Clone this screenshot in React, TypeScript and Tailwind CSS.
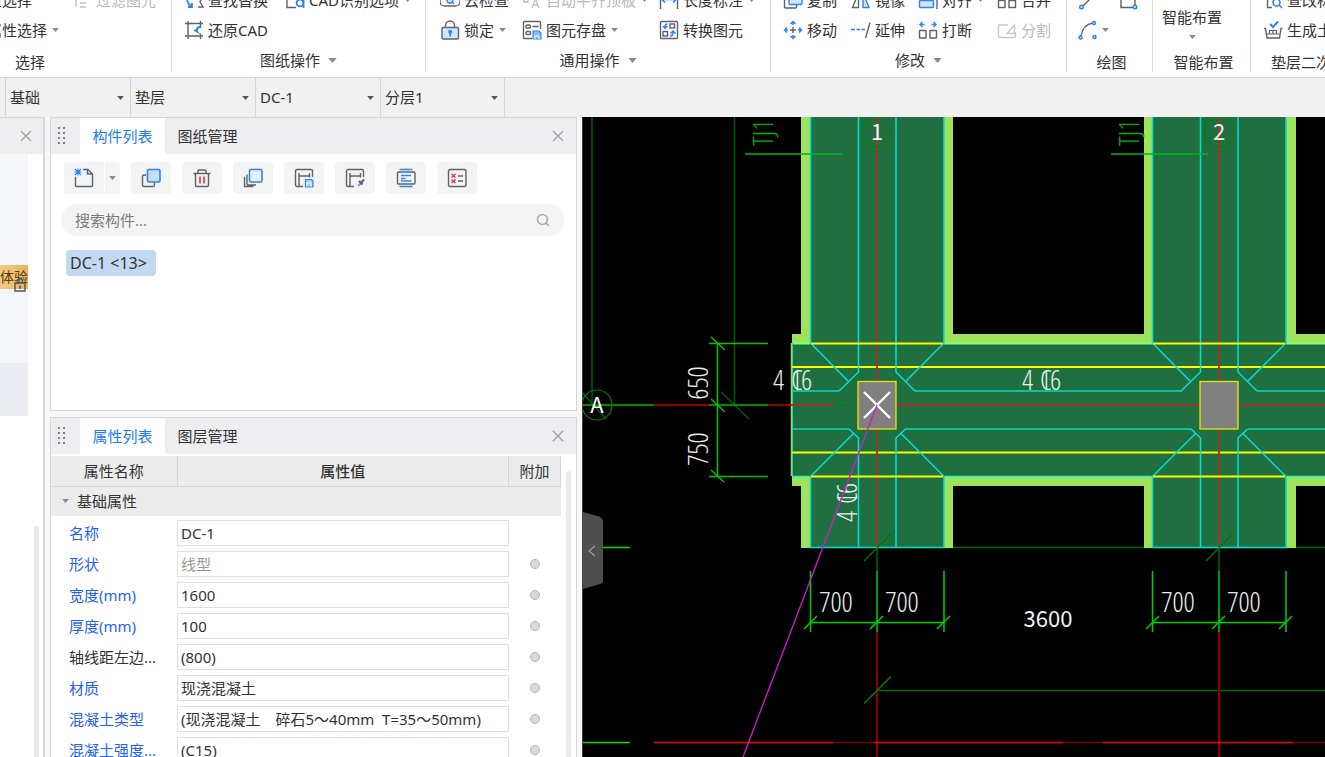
import React, { useState } from "react";

type Children = { children: React.ReactNode };

const FONT = "font-['Noto_Sans','Noto_Sans_CJK_SC',sans-serif]";

/* ---------- icons ---------- */

function Icon({ children }: Children) {
  return (
    <svg
      viewBox="0 0 20 20"
      className="h-5 w-5 shrink-0"
      fill="none"
      stroke="#5c6270"
      strokeWidth="1.4"
      aria-hidden="true"
    >
      {children}
    </svg>
  );
}

const BLUE = "#2b85f0";

const icons = {
  filter: (
    <Icon>
      <g stroke="#c4c4c4">
        <path d="M4 2v15M8 5h6M8 9h6M8 13h6M8 17h6M1 4h3" />
      </g>
    </Icon>
  ),
  find: (
    <Icon>
      <path d="M12 3a6 6 0 0 1 4 9l3 5h-5" />
      <path d="M3 7q0 8 5 9M8 13v4H4" stroke={BLUE} strokeWidth="1.8" />
    </Icon>
  ),
  cadIdentify: (
    <Icon>
      <path d="M2 1v16.5h9" />
      <circle cx="15" cy="13" r="3.4" stroke={BLUE} strokeWidth="1.8" />
      <path d="M18.5 10v8" stroke={BLUE} strokeWidth="1.8" />
    </Icon>
  ),
  restoreCad: (
    <Icon>
      <path d="M1 3.500h18M1 16h18M4 1v18M16.500 1v7M16.500 13.500V19" />
      <path d="M17 6.500q-4 .5-4.500 4" stroke={BLUE} strokeWidth="2.2" />
      <path d="M9.500 10.500 14 8v3.500l3 3.500z" fill={BLUE} stroke="none" />
    </Icon>
  ),
  cloudCheck: (
    <Icon>
      <path d="M4 7a4.500 4.500 0 0 0 1 9h10a4.500 4.500 0 0 0 1-9" />
      <circle cx="10" cy="10" r="3" stroke={BLUE} fill="#d5e7fc" />
      <path d="m12 12 2 2" stroke={BLUE} />
    </Icon>
  ),
  alignSlab: (
    <Icon>
      <g stroke="#c0c0c0">
        <path d="M2 2v10h4V2M10 2v7M10 18l3.500-9 3.500 9M11.500 15h4" />
      </g>
    </Icon>
  ),
  lengthDim: (
    <Icon>
      <path d="M1.500 2v17M18.500 2v17" />
      <path d="M3 9.500h14M6 6.500 3 9.500l3 3M14 6.500l3 3-3 3" stroke={BLUE} strokeWidth="1.6" />
    </Icon>
  ),
  lock: (
    <Icon>
      <path d="M5.500 7.500V5.500a4.500 4.500 0 0 1 9 0v2" />
      <rect x="2" y="7.500" width="16.500" height="11.500" rx="1.200" fill="#d3e6fc" />
      <circle cx="10.200" cy="11.800" r="2" fill={BLUE} stroke="none" />
      <path d="M10.200 12v4.500" stroke={BLUE} strokeWidth="1.800" />
    </Icon>
  ),
  saveElement: (
    <Icon>
      <path d="M10 18.500H2.500A1 1 0 0 1 1.500 17.500v-15a1 1 0 0 1 1-1h15a1 1 0 0 1 1 1V9M10.500 6.500h6" />
      <rect x="4" y="5" width="4.500" height="3" rx="1" />
      <rect x="4" y="11.500" width="4.500" height="3" rx="1" />
      <path d="M11 11h6l2 2v6h-8z" fill="#8abcf7" stroke={BLUE} strokeWidth="1.100" />
      <path d="M13 19v-3h4v3" stroke="#fff" strokeWidth="1" />
    </Icon>
  ),
  convert: (
    <Icon>
      <rect x="1.500" y="1.500" width="17" height="17" rx="1" />
      <rect x="11" y="4" width="4.500" height="4" />
      <rect x="4" y="11.500" width="4.500" height="4.500" />
      <path d="M8.500 4Q6 4 6 7M4 6l2 2.500L8.500 6M11 16q3 0 3-3.500M11.500 13.500 14 11l2.500 2.500" stroke={BLUE} strokeWidth="1.500" />
    </Icon>
  ),
  copy: (
    <Icon>
      <path d="M4 7H2.500a1 1 0 0 0-1 1v9a1 1 0 0 0 1 1h10a1 1 0 0 0 1-1v-2" />
      <rect x="6" y="3" width="13" height="11.500" rx="1.500" fill="#d3e6fc" stroke={BLUE} />
    </Icon>
  ),
  mirror: (
    <Icon>
      <path d="M7.500 3v14.500H1.500z" />
      <path d="M12 3v14.500h6z" fill="#d3e6fc" stroke={BLUE} />
    </Icon>
  ),
  alignTo: (
    <Icon>
      <rect x="1.500" y="10.500" width="14" height="7" rx="1" fill="#d3e6fc" stroke={BLUE} />
      <path d="M19 1v18" />
    </Icon>
  ),
  merge: (
    <Icon>
      <rect x="1.500" y="10.500" width="6.500" height="7" />
      <rect x="12" y="10.500" width="6.500" height="7" />
      <path d="M5 6h10" stroke={BLUE} />
    </Icon>
  ),
  move: (
    <Icon>
      <path d="M7 10h6M10 7v6" />
      <path
        d="M7.500 4 10 1.500 12.500 4M7.500 16l2.500 2.500 2.500-2.500M4 7.500 1.500 10 4 12.500M16 7.500l2.500 2.500-2.500 2.500M10 1.500v3.500M10 15v3.500M1.500 10H5M15 10h3.500"
        stroke={BLUE}
        strokeWidth="1.500"
      />
    </Icon>
  ),
  extend: (
    <Icon>
      <path d="M0 9.500h4M5.500 9.500h3.500M10.500 9.500H14" stroke={BLUE} strokeWidth="1.600" />
      <path d="M19 2.500 14.500 18" />
    </Icon>
  ),
  breakApart: (
    <Icon>
      <rect x="1.500" y="10.500" width="6.500" height="7.500" rx=".5" />
      <rect x="12" y="10.500" width="6.500" height="7.500" rx=".5" />
      <path d="M4.500 2 2 4.500 4.500 7M2 4.500h4.500M15.500 2 18 4.500 15.500 7M18 4.500h-4.500" stroke={BLUE} strokeWidth="1.500" />
    </Icon>
  ),
  split: (
    <Icon>
      <g stroke="#c8c8c8">
        <path d="M11 5H2.500a1 1 0 0 0-1 1v10.500a1 1 0 0 0 1 1h15a1 1 0 0 0 1-1V12M10 13.500l7.500-8.500v8.500z" />
      </g>
    </Icon>
  ),
  line: (
    <Icon>
      <path d="M5 16 16 5" />
      <circle cx="3.500" cy="17" r="1.800" stroke={BLUE} fill="#d3e6fc" />
    </Icon>
  ),
  rect: (
    <Icon>
      <path d="M2 2v15.500h14V2" />
      <circle cx="16" cy="17" r="1.800" stroke={BLUE} fill="#d3e6fc" />
    </Icon>
  ),
  arc: (
    <Icon>
      <path d="M3 16C4 8 8 4 15 3" />
      <g stroke={BLUE} fill="#d3e6fc">
        <circle cx="2.500" cy="17.500" r="1.500" />
        <circle cx="16" cy="3" r="1.500" />
        <circle cx="16.500" cy="17" r="1.500" />
      </g>
    </Icon>
  ),
  editLabel: (
    <Icon>
      <path d="M3 8q2 1 1.500 4v5.500H9" />
      <circle cx="13.500" cy="12.500" r="3.500" stroke={BLUE} strokeWidth="1.600" />
      <path d="m16 15 3 3" stroke={BLUE} strokeWidth="1.600" />
    </Icon>
  ),
  earthwork: (
    <Icon>
      <path d="M1 8.500h1.500L4 18h12.500L18 8.500h1.500" />
      <path d="M6.500 14v-3.500h7V14M10 10.500V14M4 14h12.500" strokeWidth="1.200" />
      <path d="m7 4 3 3 5-5.500" stroke={BLUE} strokeWidth="2" />
    </Icon>
  ),
  create: (
    <Icon>
      <path d="M9 1.500h5l4.500 4.500v11.500a1 1 0 0 1-1 1h-15a1 1 0 0 1-1-1V9M13.500 1.500V6h5" />
      <path d="M1 1l6 6M7 1 1 7M4 .5v7M.5 4h7" stroke={BLUE} strokeWidth="1.100" />
    </Icon>
  ),
  duplicate: (
    <Icon>
      <path d="M5 7H3a1.500 1.500 0 0 0-1.500 1.500v8.500A1.500 1.500 0 0 0 3 18.500h9a1.500 1.500 0 0 0 1.500-1.500v-3" />
      <rect x="6.500" y="1.500" width="12.500" height="12.500" rx="1.500" fill="#c6dcf7" stroke={BLUE} strokeWidth="1.600" />
    </Icon>
  ),
  remove: (
    <Icon>
      <path d="M1.500 5.500h17M6 5V3a1 1 0 0 1 1-1h6a1 1 0 0 1 1 1v2M3.500 5.500v11.500a1.500 1.500 0 0 0 1.500 1.500h10a1.500 1.500 0 0 0 1.500-1.500V5.500" />
      <path d="M8 8.500v7M12 8.500v7" stroke="#e8343a" strokeWidth="1.600" />
    </Icon>
  ),
  layerCopy: (
    <Icon>
      <path d="M4 6.500v9.500a1 1 0 0 0 1 1h8M1.500 9v9.500h9" />
      <rect x="6.500" y="1.500" width="12.500" height="12.500" rx="1.500" fill="#e6f0fd" stroke={BLUE} strokeWidth="1.600" />
    </Icon>
  ),
  saveMember: (
    <Icon>
      <path d="M9 18.500H3A1.500 1.500 0 0 1 1.500 17V3A1.500 1.500 0 0 1 3 1.500h14A1.500 1.500 0 0 1 18.500 3v6M5 18V5M5 8h10.500M15.500 5v4.500" />
      <path d="M11.500 11.500h6l1.500 1.500v6h-7.500z" fill="#a9cdf8" stroke={BLUE} strokeWidth="1.200" />
      <path d="M13 18.500V15h4v3.500" stroke="#fff" strokeWidth="1.100" />
    </Icon>
  ),
  pickMember: (
    <Icon>
      <path d="M9 18.500H3A1.500 1.500 0 0 1 1.500 17V3A1.500 1.500 0 0 1 3 1.500h14A1.500 1.500 0 0 1 18.500 3v6M5 18V5M5 8h10.500M15.500 5v4.500" />
      <path d="m13 18 4-4" stroke="#6f9fe0" strokeWidth="2" />
      <path d="m14 13 3.500 3.500M16 15l3-3.500" strokeWidth="2.200" />
    </Icon>
  ),
  textPanel: (
    <Icon>
      <rect x="1.500" y="4" width="17.500" height="12" rx="1" />
      <path d="M3.500 1.500h13M3.500 18.500h13" stroke={BLUE} strokeWidth="1.600" />
      <path d="M5 7.500h10M5 10.500h4.500M5 13h10.500" stroke={BLUE} strokeWidth="1.400" />
    </Icon>
  ),
  checkList: (
    <Icon>
      <rect x="1.500" y="1.500" width="17.500" height="17" rx="1.500" />
      <path d="M11 8h5M11 13h5" />
      <path d="m4.500 6 4 3.500M8.500 6l-4 3.500M4.500 11.500l4 3.500M8.500 11.500l-4 3.500" stroke="#e8343a" strokeWidth="1.500" />
    </Icon>
  ),
};

function Caret({ tone = "#8a8a8a", large = false }: { tone?: string; large?: boolean }) {
  return (
    <svg viewBox="0 0 10 6" className={large ? "h-[5px] w-[9px] shrink-0" : "h-[4px] w-[7px] shrink-0"} aria-hidden="true">
      <polygon points="0,0 10,0 5,6" fill={tone} />
    </svg>
  );
}

function Close({ label }: { label: string }) {
  return (
    <button type="button" aria-label={label} className="flex h-5 w-5 items-center justify-center">
      <svg viewBox="0 0 12 12" className="h-3 w-3" stroke="#a0a0a0" strokeWidth="1.400" aria-hidden="true">
        <path d="m1 1 10 10M11 1 1 11" />
      </svg>
    </button>
  );
}

/* ---------- ribbon ---------- */

type ToolProps = { icon?: React.ReactNode; label: string; menu?: boolean; off?: boolean };

function Tool({ icon, label, menu, off }: ToolProps) {
  return (
    <button
      type="button"
      disabled={off}
      className={`flex h-[30px] items-center gap-1 whitespace-nowrap ${off ? "text-[#b9b9b9]" : "text-[#333]"}`}
    >
      {icon}
      <span>{label}</span>
      {menu && (
        <span className="pl-[1px]">
          <Caret />
        </span>
      )}
    </button>
  );
}

function GroupLabel({ children, menu }: Children & { menu?: boolean }) {
  if (menu) {
    return (
      <button type="button" className="flex h-[30px] w-full items-center justify-center gap-2 whitespace-nowrap">
        {children}
        <Caret large />
      </button>
    );
  }
  return <div className="flex h-[34px] items-center justify-center pl-1 whitespace-nowrap">{children}</div>;
}

function Ribbon() {
  return (
    <header className="h-[78px] shrink-0 overflow-hidden border-b border-[#d6d6d6] bg-white text-[15px]/[22px] text-[#333]">
      <div className="-mt-[15px] flex h-[87px] divide-x divide-[#d9d9d9]">
        <section className="w-[172px] shrink-0">
          <div className="grid grid-cols-[104px_1fr]">
            <div className="-ml-[28px]">
              <Tool label="批量选择" />
              <Tool label="按属性选择" menu />
            </div>
            <div className="-ml-8">
              <Tool icon={icons.filter} label="过滤图元" off />
            </div>
          </div>
          <div className="w-14">
            <GroupLabel>选择</GroupLabel>
          </div>
        </section>
        <section className="w-[254px] shrink-0">
          <div className="grid grid-cols-[101px_1fr] pl-3">
            <Tool icon={icons.find} label="查找替换" />
            <Tool icon={icons.cadIdentify} label="CAD识别选项" menu />
            <Tool icon={icons.restoreCad} label="还原CAD" />
          </div>
          <GroupLabel menu>图纸操作</GroupLabel>
        </section>
        <section className="w-[345px] shrink-0">
          <div className="grid grid-cols-[82px_137px_1fr] pl-[14px]">
            <Tool icon={icons.cloudCheck} label="云检查" />
            <Tool icon={icons.alignSlab} label="自动平齐顶板" menu off />
            <Tool icon={icons.lengthDim} label="长度标注" menu />
            <Tool icon={icons.lock} label="锁定" menu />
            <Tool icon={icons.saveElement} label="图元存盘" menu />
            <Tool icon={icons.convert} label="转换图元" />
          </div>
          <GroupLabel menu>通用操作</GroupLabel>
        </section>
        <section className="w-[296px] shrink-0">
          <div className="grid grid-cols-[68px_67px_79px_1fr] pl-3">
            <Tool icon={icons.copy} label="复制" />
            <Tool icon={icons.mirror} label="镜像" />
            <Tool icon={icons.alignTo} label="对齐" menu />
            <Tool icon={icons.merge} label="合并" />
            <Tool icon={icons.move} label="移动" />
            <Tool icon={icons.extend} label="延伸" />
            <Tool icon={icons.breakApart} label="打断" />
            <Tool icon={icons.split} label="分割" off />
          </div>
          <GroupLabel menu>修改</GroupLabel>
        </section>
        <section className="w-[86px] shrink-0">
          <div className="grid grid-cols-[41px_1fr] pl-[11px]">
            <button type="button" aria-label="直线" className="flex h-[30px] items-center">
              {icons.line}
            </button>
            <button type="button" aria-label="矩形" className="flex h-[30px] items-center">
              {icons.rect}
            </button>
            <button type="button" aria-label="圆弧" className="flex h-[30px] items-center gap-1">
              {icons.arc}
              <Caret />
            </button>
          </div>
          <GroupLabel>绘图</GroupLabel>
        </section>
        <section className="w-[98px] shrink-0">
          <button type="button" className="flex h-[60px] w-[78px] flex-col items-center justify-end gap-[7px] pb-[6px]">
            <span>智能布置</span>
            <Caret />
          </button>
          <GroupLabel>智能布置</GroupLabel>
        </section>
        <section className="min-w-0 flex-1 overflow-hidden pl-3">
          <Tool icon={icons.editLabel} label="查改标高" />
          <Tool icon={icons.earthwork} label="生成土方" />
          <div className="flex h-[34px] items-center pl-2 whitespace-nowrap">垫层二次编辑</div>
        </section>
      </div>
    </header>
  );
}

/* ---------- context bar ---------- */

const contexts = [
  { label: "构件类别", value: "基础" },
  { label: "构件类型", value: "垫层" },
  { label: "构件", value: "DC-1" },
  { label: "分层", value: "分层1" },
];

function ContextBar() {
  return (
    <nav className="flex h-[39px] shrink-0 bg-[#f1f1f1] pl-[5px]">
      {contexts.map((c) => (
        <div key={c.label} className="relative w-[125px] border-l border-[#d6d6d6] last:border-r">
          <select
            aria-label={c.label}
            defaultValue={c.value}
            className="h-full w-full appearance-none bg-transparent pl-1 text-[15px] text-[#333] outline-none"
          >
            <option>{c.value}</option>
          </select>
          <span className="pointer-events-none absolute inset-y-0 right-[6px] flex items-center">
            <Caret tone="#555" />
          </span>
        </div>
      ))}
    </nav>
  );
}

/* ---------- dock panels ---------- */

function PanelTabs({ tabs }: { tabs: string[] }) {
  const [active, setActive] = useState(0);
  return (
    <div className="flex h-9 shrink-0 items-center bg-[#eeeef0]">
      <svg viewBox="0 0 8 18" className="mx-[7px] h-[18px] w-2" fill="#808080" aria-hidden="true">
        <path d="M0 0h2v2H0zM5 0h2v2H5zM0 5h2v2H0zM5 5h2v2H5zM0 10h2v2H0zM5 10h2v2H5zM0 15h2v2H0zM5 15h2v2H5z" />
      </svg>
      <div role="tablist" className="ml-[7px] flex h-full">
        {tabs.map((t, i) => (
          <button
            key={t}
            type="button"
            role="tab"
            aria-selected={i === active}
            onClick={() => setActive(i)}
            className={`w-[85px] text-[15px] ${i === active ? "bg-white text-[#1c7df2]" : "text-[#333]"}`}
          >
            {t}
          </button>
        ))}
      </div>
      <div className="ml-auto pr-2">
        <Close label="关闭" />
      </div>
    </div>
  );
}

const memberTools = [
  { label: "复制", icon: icons.duplicate },
  { label: "删除", icon: icons.remove },
  { label: "层间复制", icon: icons.layerCopy },
  { label: "构件存盘", icon: icons.saveMember },
  { label: "提取构件", icon: icons.pickMember },
  { label: "构件排序", icon: icons.textPanel },
  { label: "批量删除", icon: icons.checkList },
];

function MemberPanel() {
  return (
    <section className="flex h-[294px] shrink-0 flex-col border border-[#d6d6da] bg-white">
      <PanelTabs tabs={["构件列表", "图纸管理"]} />
      <div className="flex gap-[11px] px-[13px] pt-2">
        <div className="flex h-8 gap-px">
          <button type="button" aria-label="新建" className="flex w-10 items-center justify-center rounded-l bg-[#f4f4f4]">
            {icons.create}
          </button>
          <button type="button" aria-label="新建选项" className="flex w-[15px] items-center justify-center rounded-r bg-[#f4f4f4]">
            <Caret />
          </button>
        </div>
        {memberTools.map((t) => (
          <button
            key={t.label}
            type="button"
            aria-label={t.label}
            className="flex h-8 w-10 items-center justify-center rounded bg-[#f4f4f4]"
          >
            {t.icon}
          </button>
        ))}
      </div>
      <label className="mr-3 ml-[10px] mt-[10px] flex h-8 items-center rounded-full bg-[#f4f4f4] pr-[14px] pl-[14px]">
        <input
          type="search"
          aria-label="搜索构件"
          placeholder="搜索构件..."
          className="min-w-0 flex-1 bg-transparent text-[15px] outline-none placeholder:text-[#7a7a7a]"
        />
        <svg viewBox="0 0 14 14" className="h-[14px] w-[14px]" fill="none" stroke="#aaa" strokeWidth="1.600" aria-hidden="true">
          <circle cx="6.500" cy="6.500" r="5" />
          <path d="m9.500 9.500 3.500 3.500" />
        </svg>
      </label>
      <button
        type="button"
        className="mt-[14px] ml-[15px] h-[26px] w-[90px] rounded bg-[#c2d9f2] pl-1 text-left text-[16px] whitespace-nowrap text-[#333]"
      >
        DC-1 &lt;13&gt;
      </button>
    </section>
  );
}

type Property = { name: string; value: string; derived?: boolean; locked?: boolean; noExtra?: boolean };

const properties: Property[] = [
  { name: "名称", value: "DC-1", noExtra: true },
  { name: "形状", value: "线型", locked: true },
  { name: "宽度(mm)", value: "1600" },
  { name: "厚度(mm)", value: "100" },
  { name: "轴线距左边...", value: "(800)", derived: true },
  { name: "材质", value: "现浇混凝土" },
  { name: "混凝土类型", value: "(现浇混凝土　碎石5～40mm\u00a0\u00a0T=35～50mm)" },
  { name: "混凝土强度...", value: "(C15)" },
];

function PropertyPanel() {
  return (
    <section className="flex min-h-0 flex-1 flex-col overflow-hidden border border-b-0 border-[#d6d6da] bg-white">
      <PanelTabs tabs={["属性列表", "图层管理"]} />
      <div className="flex min-h-0 flex-1 pt-[2px]">
        <div className="min-h-0 flex-1 overflow-hidden">
          <table className="w-full table-fixed border-collapse text-[15px]/[22px] text-[#333]">
            <colgroup>
              <col className="w-[126px]" />
              <col />
              <col className="w-[52px]" />
            </colgroup>
            <thead>
              <tr className="h-[30px] border-b border-[#d6d6d6] bg-[#ececec]">
                <th className="border-r border-[#d6d6d6] p-0 font-normal">属性名称</th>
                <th className="border-r border-[#d6d6d6] p-0 font-medium">属性值</th>
                <th className="border-r border-[#d6d6d6] p-0 font-normal">附加</th>
              </tr>
            </thead>
            <tbody>
              <tr className="h-[30px] bg-[#ececec]">
                <td colSpan={3} className="p-0">
                  <button type="button" className="flex items-center gap-2 pl-[11px]">
                    <Caret />
                    基础属性
                  </button>
                </td>
              </tr>
              <tr className="h-px">
                <td colSpan={3} className="p-0" />
              </tr>
              {properties.map((p, i) => (
                <tr key={p.name} className="h-[31px]">
                  <td className={`p-0 pl-[18px] whitespace-nowrap ${p.derived ? "text-[#333]" : "text-[#1f62f5]"}`}>
                    <label htmlFor={`prop-${i}`}>{p.name}</label>
                  </td>
                  <td className="p-0">
                    <input
                      id={`prop-${i}`}
                      defaultValue={p.value}
                      readOnly={p.locked}
                      className={`block h-[26px] w-full border border-[#e0e0e0] bg-white pl-[3px] text-[15px] outline-none ${
                        p.locked ? "text-[#999]" : "text-[#333]"
                      }`}
                    />
                  </td>
                  <td className="p-0">
                    {!p.noExtra && (
                      <input
                        type="checkbox"
                        aria-label={`附加 ${p.name}`}
                        className="mx-auto block h-[10px] w-[10px] appearance-none rounded-full border border-[#b4b5ba] bg-[#d9dade]"
                      />
                    )}
                  </td>
                </tr>
              ))}
            </tbody>
          </table>
        </div>
        <div className="w-[15px] shrink-0 pt-[15px] pl-[5px]">
          <div className="h-full w-[5px] rounded-t-full bg-[#ebebeb]" />
        </div>
      </div>
    </section>
  );
}

function NavigatorStrip() {
  return (
    <aside className="flex w-[45px] shrink-0 flex-col border-t border-r-2 border-[#d6d6da] bg-white">
      <div className="flex h-9 shrink-0 items-center justify-end bg-[#eeeef0] pr-[7px]">
        <Close label="关闭导航栏" />
      </div>
      <div className="flex min-h-0 flex-1">
        <div className="w-[28px]">
          <div className="h-[209px] bg-[#f5f6f9] pt-[111px]">
            <div className="relative h-6 overflow-visible bg-linear-to-r from-[#f0cc84] to-[#e6b45a] text-[14px]/[24px] whitespace-nowrap text-[#5c3a10]">
              体验
              <svg viewBox="0 0 12 14" className="absolute top-[13px] left-[14px] h-[14px] w-3" fill="none" stroke="#4c5566" strokeWidth="1.400" aria-hidden="true">
                <path d="M3.500 5V3a2.500 2.500 0 0 1 5 0v2M1 5h10v8H1zM6 8v3M5 8.500h2" />
              </svg>
            </div>
          </div>
          <div className="h-[53px] bg-[#ebecf1]" />
        </div>
        <div className="ml-[6px] w-[5px] pt-[372px]">
          <div className="h-full rounded-t-full bg-[#e9e9e9]" />
        </div>
      </div>
    </aside>
  );
}

/* ---------- drawing ---------- */

const NARROW = "'Open Sans Condensed Light','Roboto Condensed Light','Roboto Condensed','Liberation Sans Narrow','Noto Sans',sans-serif";

function Rebar({ x, y }: { x: number; y: number }) {
  return (
    <g fill="#e6efe9" fontFamily={NARROW} fontSize="28" fontWeight="300">
      <text x={x} y={y}>4</text>
      <text x={x + 18} y={y}>C</text>
      <text x={x + 18} y={y}>1</text>
      <text x={x + 28} y={y}>6</text>
    </g>
  );
}

function Joint({ x, tagX, name }: { x: number; tagX: number; name: string }) {
  return (
    <g>
      <path d={`M${x} 117V548`} stroke="#9b3826" strokeWidth="2" />
      <path d={`M${x} 632V757`} stroke="#8c0000" strokeWidth="2" />
      <path d={`M${x} 548V571`} stroke="#004d00" strokeWidth="2" />
      <g stroke="#06dfd6" strokeWidth="1.500" fill="none">
        <path d={`M${x - 66.500} 117V343L${x - 29} 381M${x + 67} 117V343L${x + 29} 381`} />
        <path d={`M${x - 18.500} 117V372L${x - 38} 391M${x + 19} 117V372L${x + 38} 391`} />
        <path d={`M${x - 28} 429L${x - 18.500} 438V548M${x + 28.500} 429L${x + 19} 438V548`} />
        <path d={`M${x - 23.500} 433.500L${x - 66.500} 476.500V547.500H${x + 67}V476.500L${x + 24} 433.500`} />
      </g>
      <path d={`M${x - 66} 343.500H${x + 66}M${x - 66} 476.500H${x + 66}`} stroke="#fdfd00" strokeWidth="2" />
      <circle cx={x} cy="132" r="15" fill="none" stroke="#0c7a1c" strokeWidth="1.200" />
      <text x={x} y="140" textAnchor="middle" fill="#eef4ee" fontSize="22" fontFamily="'Noto Sans CJK SC',sans-serif">
        {name}
      </text>
      <path d={`M${x - 13} 561L${x + 14} 534M877 690.500l-13 13M877 690.500l14-14`} stroke="#007400" strokeWidth="1.300" />
      <rect x={x - 19} y="381.500" width="38" height="47.500" fill="#808080" stroke="#e6e600" strokeWidth="1.300" />
      <g stroke="#00d000" strokeWidth="1.500">
        <path d={`M${x - 66.500} 571V632M${x} 571V632M${x + 67} 571V632M${x - 66.500} 622.500H${x + 67}`} />
        <path d={`M${x - 73} 629l13-13M${x - 7} 629l13-13M${x + 60} 629l13-13`} />
      </g>
      <g fill="#e8e8e8" fontFamily={NARROW} fontSize="28" fontWeight="300" textAnchor="middle">
        <text x={x - 41} y="612">700</text>
        <text x={x + 25} y="612">700</text>
      </g>
      <path d={`M${tagX} 154h97`} stroke="#00b818" strokeWidth="1.500" />
      <text
        transform={`translate(${tagX + 28} 146) rotate(-90)`}
        fill="#00b000"
        fontSize="28"
        fontWeight="300"
        fontFamily={NARROW}
      >
        TJ1
      </text>
    </g>
  );
}

function Drawing() {
  return (
    <svg className="block h-full w-full" role="img" aria-label="垫层平面图">
      <g transform="translate(-583 -117)">
        <g stroke="#005a00" strokeWidth="1.500">
          <path d="M592 117V405M734.500 117V405M721 392l28 27M582 392l24 27" />
          <path d="M944 547.500H3000M877 690.500H3000" stroke="#006a00" />
        </g>
        <g fill="#9fe35a">
          <path d="M792 334H3000V486H792zM801 117H953V548H801zM1144 117H1296V548H1144z" />
        </g>
        <g fill="#206f40">
          <path d="M792 343H3000V476H792zM810 117H944V548H810zM1153 117H1286V548H1153z" />
        </g>
        <path d="M944 343.500H1153M1286 343.500H3000M792 343.500H810" stroke="#7dff80" strokeWidth="2" />
        <path d="M944 476.500H1153M1286 476.500H3000M792 476.500H810" stroke="#2af0c8" strokeWidth="1.500" />
        <path d="M792 391H839M915 391H1182M1257 391H3000M792 429H849M905 429H1191M1248 429H3000" stroke="#0fd3c5" strokeWidth="1.500" />
        <path d="M791.500 343V476" stroke="#b8d800" strokeWidth="1.500" />
        <path d="M792.500 343V476" stroke="#00e0d0" />

        <path d="M582 405H654M709 405H768" stroke="#00b400" strokeWidth="1.500" />
        <path d="M654 405H709M768 405H792" stroke="#c00000" strokeWidth="1.500" />
        <path d="M792 405H834M896 405H3000" stroke="#a53224" strokeWidth="2" />
        <path d="M834 405H852" stroke="#0a7a1c" strokeWidth="1.500" />
        <path d="M792 367H3000M792 452.500H3000" stroke="#fdfd00" strokeWidth="2" />

        <path d="M602 547.500H630M582 742.500H630" stroke="#00e000" strokeWidth="1.500" />

        <Joint x={877} tagX={745} name="1" />
        <Joint x={1219} tagX={1111} name="2" />

        <path d="M654 742.500H833M874 742.500H1063M1103 742.500H1293M1333 742.500H3000" stroke="#f50000" strokeWidth="1.500" />
        <path d="M833 742.500H874M1063 742.500H1103M1293 742.500H1333" stroke="#700000" strokeWidth="1.500" />

        <g stroke="#00c400" strokeWidth="1.500">
          <path d="M717.500 343V476M709 343.500H768M709 476.500H768" />
          <path d="M711 337l14 13M711 399l14 13M711 470l13 12" />
        </g>
        <g fill="#e8e8e8" fontFamily={NARROW} fontSize="28" fontWeight="300" textAnchor="middle">
          <text transform="translate(708 383) rotate(-90)">650</text>
          <text transform="translate(708 449) rotate(-90)">750</text>
        </g>

        <circle cx="597" cy="405" r="15" fill="none" stroke="#008000" strokeWidth="1.200" />
        <text x="597" y="413" textAnchor="middle" fill="#fff" fontSize="22" fontFamily="'Noto Sans CJK SC',sans-serif">
          A
        </text>
        <text x="1048" y="627" textAnchor="middle" fill="#f2f2f2" fontSize="22" fontFamily="'Noto Sans CJK SC',sans-serif">
          3600
        </text>

        <Rebar x={773} y={390} />
        <Rebar x={1022} y={390} />
        <g transform="translate(857 522) rotate(-90)">
          <Rebar x={0} y={0} />
        </g>

        <path d="M864 392l26 26M890 392l-26 26" stroke="#fff" strokeWidth="2.400" />
        <path d="M877 405 743 757" stroke="#d418d4" strokeWidth="1.300" />
      </g>
    </svg>
  );
}

function Viewport() {
  return (
    <main className="relative min-w-0 flex-1 overflow-hidden border-l border-[#444] bg-black">
      <Drawing />
      <button type="button" aria-label="收起侧栏" className="absolute top-[395px] left-0 h-[78px] w-5">
        <svg viewBox="0 0 20 78" className="h-full w-full" aria-hidden="true">
          <path d="M0 0 16 4.500Q20 6 20 10V68Q20 71 17 72L0 77z" fill="#4e4e4e" />
          <path d="m12 34-6 5 6 5" fill="none" stroke="#9a9a9a" strokeWidth="1.300" />
        </svg>
      </button>
    </main>
  );
}

export default function App() {
  return (
    <div className={`flex h-screen flex-col overflow-hidden bg-white ${FONT}`}>
      <Ribbon />
      <ContextBar />
      <div className="flex min-h-0 flex-1">
        <NavigatorStrip />
        <div className="flex w-[537px] shrink-0 flex-col gap-[6px] bg-[#f7f7f8] pr-[5px] pl-[5px]">
          <MemberPanel />
          <PropertyPanel />
        </div>
        <Viewport />
      </div>
    </div>
  );
}
